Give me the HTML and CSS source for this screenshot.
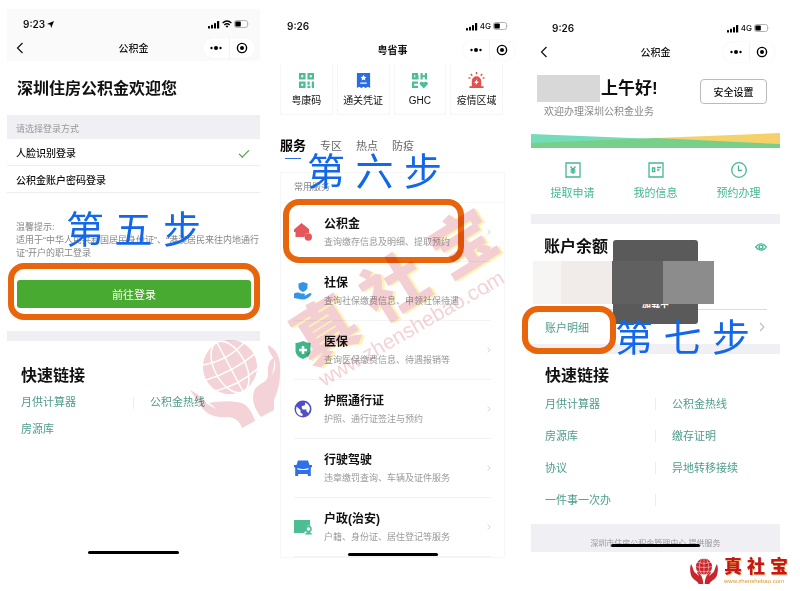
FILE: index.html
```
<!DOCTYPE html>
<html lang="zh-CN">
<head>
    <meta charset="utf-8">
    <title>深圳公积金查询步骤</title>
    <meta name="viewport" content="width=device-width, initial-scale=1">
    <link rel="stylesheet" href="styles.css">
</head>
<body>
    <!-- shared icons -->
    <svg class="defs" width="0" height="0">
        <symbol id="signal" viewBox="0 0 12 9">
            <rect x="0" y="6" width="2" height="2.5" rx=".6"/><rect x="3" y="4.7" width="2" height="3.8" rx=".6"/><rect x="6" y="3" width="2" height="5.5" rx=".6"/><rect x="9" y="1" width="2.2" height="7.5" rx=".6"/>
        </symbol>
        <symbol id="battery" viewBox="0 0 16 8">
            <rect x=".5" y=".5" width="13" height="7" rx="2" fill="none" stroke="#aaa" stroke-width=".9"/>
            <rect x="1.4" y="1.4" width="5.4" height="5.2" rx=".8"/><path d="M14.6 2.8q1.2 1.2 0 2.4z" fill="#aaa"/>
        </symbol>
        <symbol id="dots" viewBox="0 0 12 6">
            <circle cx="1.5" cy="3" r="1.2"/><circle cx="6" cy="3" r="2"/><circle cx="10.5" cy="3" r="1.2"/>
        </symbol>
        <symbol id="target" viewBox="0 0 12 12">
            <circle cx="6" cy="6" r="4.6" fill="none" stroke="#000" stroke-width="1.4"/><circle cx="6" cy="6" r="2"/>
        </symbol>
        <symbol id="back" viewBox="0 0 8 12">
            <path d="M6.5 1L1.5 6l5 5" fill="none" stroke="#111" stroke-width="1.2"/>
        </symbol>
        <symbol id="more" viewBox="0 0 6 10">
            <path d="M1 1l4 4-4 4" fill="none" stroke="currentColor" stroke-width="1.1"/>
        </symbol>
        <symbol id="globe" viewBox="0 0 60 60">
            <circle cx="30" cy="30" r="28" fill="currentColor"/>
            <g fill="none" stroke="#fff" stroke-width="1.6">
                <path d="M30 1v58M1 30q29 6 58 0M6 15q24 8 48 0M6 45q24 6 48 0"/>
                <ellipse cx="30" cy="30" rx="16" ry="29"/>
            </g>
        </symbol>
        <symbol id="hand" viewBox="0 0 42 66">
            <path d="M3 4c6 10 6 18 10 24l14 12c-1-6-8-10-5-12 10 5 17 16 18 36H26C22 54 8 52 3 38-1 24 0 12 3 4z" fill="currentColor"/>
        </symbol>
    </svg>

    <main class="phones">

        <!-- step 5: login -->
        <section class="phone login">
            <header class="head">
                <div class="status">
                    <span>9:23 <svg width="7" height="7" viewBox="0 0 8 8"><path d="M8 0L4.8 8 3.8 4.2 0 3.4z"/></svg></span>
                    <span class="signals">
                        <svg width="12" height="9"><use href="#signal"/></svg>
                        <svg width="10" height="8" viewBox="0 0 10 8"><path d="M.6 3q4.400-4 8.800 0M2.300 4.900q2.700-2.300 5.400 0" fill="none" stroke="#000" stroke-width="1.300"/><path d="M3.600 6.200q1.400-1.200 2.800 0L5 7.700z"/></svg>
                        <svg width="16" height="8"><use href="#battery"/></svg>
                    </span>
                </div>
                <nav class="nav">
                    <button class="back" aria-label="返回"><svg width="8" height="12"><use href="#back"/></svg></button>
                    <h1>公积金</h1>
                    <div class="capsule">
                        <button aria-label="更多"><svg width="12" height="6"><use href="#dots"/></svg></button>
                        <button aria-label="关闭"><svg width="12" height="12"><use href="#target"/></svg></button>
                    </div>
                </nav>
            </header>
            <h2 class="welcome">深圳住房公积金欢迎您</h2>
            <p class="choose">请选择登录方式</p>
            <label class="method">人脸识别登录<input type="radio" name="method" checked></label>
            <label class="method">公积金账户密码登录<input type="radio" name="method"></label>
            <div class="notice">
                <p>温馨提示:</p>
                <p>适用于“中华人民共和国居民身份证”、“港澳居民来往内地通行<br>证”开户的职工登录</p>
            </div>
            <div class="submit">
                <button>前往登录</button>
                <span class="ring"></span>
            </div>
            <div class="band"></div>
            <h2 class="quick">快速链接</h2>
            <div class="links">
                <a href="#">月供计算器</a><a href="#">公积金热线</a>
                <a href="#">房源库</a>
            </div>
            <div class="step">第 五 步</div>
            <div class="homebar"></div>
        </section>

        <!-- step 6: service list -->
        <section class="phone services">
            <header class="head">
                <div class="status">
                    <span>9:26</span>
                    <span class="signals">
                        <svg width="12" height="9"><use href="#signal"/></svg>
                        <small>4G</small>
                        <svg width="16" height="8"><use href="#battery"/></svg>
                    </span>
                </div>
                <nav class="nav">
                    <span></span>
                    <h1>粤省事</h1>
                    <div class="capsule">
                        <button aria-label="更多"><svg width="12" height="6"><use href="#dots"/></svg></button>
                        <button aria-label="关闭"><svg width="12" height="12"><use href="#target"/></svg></button>
                    </div>
                </nav>
            </header>
            <div class="cards">
                <a href="#">
                    <svg viewBox="0 0 18 18"><g fill="none" stroke="#4cbd96" stroke-width="2.400"><path d="M2.200 2.200h4.600v4.600H2.200zM11.200 2.200h4.600v4.600h-4.600zM2.200 11.200h4.600v4.600H2.200z"/><path d="M11.200 10v3.500M10 15.800h3M15.800 10v7"/></g></svg>
                    粤康码
                </a>
                <a href="#">
                    <svg viewBox="0 0 18 18"><path d="M2 1h14v16l-2.300-1.500L11.300 17 9 15.500 6.700 17l-2.400-1.500L2 17z" fill="#2b6be4"/><path d="M9 3l1 2 2.200.3-1.600 1.500.4 2.200-2-1-2 1 .4-2.200-1.600-1.500L8 5zM5.500 11h7v1.500h-7z" fill="#fff"/></svg>
                    通关凭证
                </a>
                <a href="#">
                    <svg viewBox="0 0 18 18"><path d="M7.500 2.200H2.200v4.600h4.600V4.500H4.500M11.200 1v7M15.800 1v7M11 4.500h5M7.500 11.200H2.200v4.600h5.300" fill="none" stroke="#4cbd96" stroke-width="2.300"/><path d="M13.500 17.500L9.300 13c-1-2 2-4 4.200-1.800C15.700 9 18.700 11 17.700 13z" fill="#4cbd96"/></svg>
                    GHC
                </a>
                <a href="#">
                    <svg viewBox="0 0 18 18"><path d="M4 15V9.500a5 5 0 0 1 10 0V15h2.500v2h-15v-2z" fill="#e2504f"/><path d="M9.800 7.500L6.500 11.700h2L8 14l3.500-4h-2z" fill="#fff"/><path d="M9 0v2.500M3 2l1.500 2M15 2l-1.500 2M.5 6l2 .8M17.500 6l-2 .8" stroke="#e2504f" stroke-width="1.500"/></svg>
                    疫情区域
                </a>
            </div>
            <div class="tabs">
                <button class="active">服务</button>
                <button>专区</button>
                <button>热点</button>
                <button>防疫</button>
            </div>
            <div class="list">
                <p class="caption">常用服务</p>
                <a class="item" href="#">
                    <svg class="icon" viewBox="0 0 18 18"><path d="M0 6.500L7.500 0 15 6v4a4.500 4.500 0 0 0-4.500 4H1.500V9H0z" fill="#e4575a"/><circle cx="14.300" cy="14" r="3.700" fill="#e4575a"/></svg>
                    <span><b>公积金</b><small>查询缴存信息及明细、提取预约</small></span>
                    <svg class="more" width="4" height="6"><use href="#more"/></svg>
                    <i class="ring"></i>
                </a>
                <a class="item" href="#">
                    <svg class="icon" viewBox="0 0 18 18"><path d="M9 0l4.500 1.500V5q0 3-4.500 5Q4.500 8 4.500 5V1.500z" fill="#3595e5"/><path d="M0 11.500q4-2 7 0h3q2 1 0 2H7h4l5-2.500q2 0 1.500 1.500Q13 18 8 17.500L0 16z" fill="#3595e5"/></svg>
                    <span><b>社保</b><small>查询社保缴费信息、申领社保待遇</small></span>
                    <svg class="more" width="4" height="6"><use href="#more"/></svg>
                </a>
                <a class="item" href="#">
                    <svg class="icon" viewBox="0 0 18 18"><path d="M9 0q4 2 7.500 2v8q0 5-7.500 8Q1.500 15 1.500 10V2Q5 2 9 0z" fill="#3fb688"/><path d="M9 5v8M5 9h8" stroke="#fff" stroke-width="2.500"/></svg>
                    <span><b>医保</b><small>查询医保缴费信息、待遇报销等</small></span>
                    <svg class="more" width="4" height="6"><use href="#more"/></svg>
                </a>
                <a class="item" href="#">
                    <svg class="icon" viewBox="0 0 18 18"><circle cx="9" cy="9" r="8.500" fill="#4f4ec4"/><path d="M2.500 6.500L6.500 10v2.500l2 1.500v2q-6-.5-6.500-6zM7.500 6.500L11 5V2.500q5 2 5 6.500l-1.500 4-2-1.500V9.500H8.500z" fill="#fff"/></svg>
                    <span><b>护照通行证</b><small>护照、通行证签注与预约</small></span>
                    <svg class="more" width="4" height="6"><use href="#more"/></svg>
                </a>
                <a class="item" href="#">
                    <svg class="icon" viewBox="0 0 18 18"><path d="M4 1.500h10l1.500 4.500H18v2l-1.200.5V17h-3v-2H4.200v2h-3V8.500L0 8V6h2.500z" fill="#2f6fe8"/><path d="M3.500 9q5.500 1.800 11 0v1.500q-5.500 1-11 0z" fill="#fff"/></svg>
                    <span><b>行驶驾驶</b><small>违章缴罚查询、车辆及证件服务</small></span>
                    <svg class="more" width="4" height="6"><use href="#more"/></svg>
                </a>
                <a class="item" href="#">
                    <svg class="icon" viewBox="0 0 18 18"><path d="M0 2h16v13H0z" fill="#4dbd94"/><path d="M10.500 17v-3l1.500-1V9q2-3 5 0v8z" fill="#fff"/><circle cx="14.500" cy="11" r="2.500" fill="none" stroke="#4dbd94" stroke-width="1.500"/><path d="M11 16.500q.5-2.500 3.500-2.500t3.500 2.500z" fill="#4dbd94"/></svg>
                    <span><b>户政(治安)</b><small>户籍、身份证、居住登记等服务</small></span>
                    <svg class="more" width="4" height="6"><use href="#more"/></svg>
                </a>
            </div>
            <div class="step">第 六 步</div>
            <div class="homebar"></div>
        </section>

        <!-- step 7: account -->
        <section class="phone account">
            <header class="head">
                <div class="status">
                    <span>9:26</span>
                    <span class="signals">
                        <svg width="12" height="9"><use href="#signal"/></svg>
                        <small>4G</small>
                        <svg width="16" height="8"><use href="#battery"/></svg>
                    </span>
                </div>
                <nav class="nav">
                    <button class="back" aria-label="返回"><svg width="8" height="12"><use href="#back"/></svg></button>
                    <h1>公积金</h1>
                    <div class="capsule">
                        <button aria-label="更多"><svg width="12" height="6"><use href="#dots"/></svg></button>
                        <button aria-label="关闭"><svg width="12" height="12"><use href="#target"/></svg></button>
                    </div>
                </nav>
            </header>
            <div class="greeting">
                <div>
                    <h2><span class="name"></span>上午好!</h2>
                    <p>欢迎办理深圳公积金业务</p>
                </div>
                <button>安全设置</button>
            </div>
            <svg class="ribbon" viewBox="0 0 249 15" preserveAspectRatio="none">
                <path d="M0 1l125 5v9H0z" fill="#74dcb9"/>
                <path d="M125 5L249 0v15H125z" fill="#f5d16c"/>
                <path d="M0 10l125-5 124 6v4H0z" fill="#77cf8a"/>
            </svg>
            <div class="actions">
                <a href="#">
                    <svg viewBox="0 0 16 16"><path d="M1 1h14v14H1z"/><path d="M5.500 4.500L8 7.500l2.500-3M8 7.500v4.500M5.500 8h5M5.500 10h5"/></svg>
                    提取申请
                </a>
                <a href="#">
                    <svg viewBox="0 0 16 16"><path d="M1 1h14v14H1z"/><path d="M4.500 6h2.200v3.500H4.500zM9 5.500h4M9 8h2.500"/></svg>
                    我的信息
                </a>
                <a href="#">
                    <svg viewBox="0 0 16 16"><circle cx="8" cy="8" r="7.300"/><path d="M7.500 3.500v5H11"/></svg>
                    预约办理
                </a>
            </div>
            <div class="band"></div>
            <div class="balance">
                <h2>账户余额</h2>
                <button aria-label="显示余额"><svg width="12" height="8" viewBox="0 0 12 8"><path d="M.7 4Q6-2.500 11.300 4 6 10.500.7 4z" fill="none" stroke="#45b793" stroke-width="1.200"/><circle cx="6" cy="4" r="1.900" fill="none" stroke="#45b793" stroke-width="1.400"/></svg></button>
                <div class="toast">加载中</div>
                <div class="mosaic"><i></i><i></i><i></i><i></i></div>
            </div>
            <a class="detail" href="#">
                账户明细
                <svg width="6" height="10"><use href="#more"/></svg>
                <i class="ring"></i>
            </a>
            <div class="band"></div>
            <h2 class="quick">快速链接</h2>
            <div class="links">
                <a href="#">月供计算器</a><a href="#">公积金热线</a>
                <a href="#">房源库</a><a href="#">缴存证明</a>
                <a href="#">协议</a><a href="#">异地转移接续</a>
                <a href="#">一件事一次办</a>
            </div>
            <p class="provider">深圳市住房公积金管理中心 提供服务</p>
            <div class="step">第 七 步</div>
            <div class="homebar"></div>
        </section>
    </main>

    <footer class="brand">
        <svg width="28" height="27" viewBox="0 0 84 81">
            <g color="#c8262c">
                <use href="#globe" x="16" y="0" width="52" height="52"/>
                <use href="#hand" x="0" y="14" width="42" height="66"/>
                <use href="#hand" transform="matrix(-1 0 0 1 84 0)" x="0" y="14" width="42" height="66"/>
            </g>
        </svg>
        <div>
            <strong>真 社 宝</strong>
            <a href="#">www.zhenshebao.com</a>
        </div>
    </footer>

    <svg class="watermark" width="340" height="250" viewBox="0 0 340 250" aria-hidden="true">
        <g color="#f3d3d7" fill="#f3d3d7">
            <use href="#globe" width="58" height="58" transform="translate(11 153) rotate(-28 29 29)"/>
            <path d="M0 205c8 4 12 7 17 14l9 5c-2-3-6-5-7-6 11-2 26-3 35 1 6 4 9 11 11 17l-13 7c-3-8-7-10-14-11-16 1-23-4-28-12z"/>
            <path d="M78 160c8 4 12 12 12 21 1 19-4 29-6 34v10l-13 7c-8-10-10-20-6-28 5-7 13-6 13-14-1-10 2-16 6-17 1 7-1 12-2 17 4-6 4-12 2-16-4-6-6-9-6-14z"/>
        </g>
        <g transform="translate(120 182) rotate(-32)">
            <text class="mark shade" x="2" y="2">真 社 宝</text>
            <text class="mark" x="0" y="0">真 社 宝</text>
        </g>
        <text class="site" transform="translate(134 202) rotate(-30)">www.zhenshebao.com</text>
    </svg>
</body>
</html>
```
FILE: styles.css
```
*{
    margin: 0;
    padding: 0;
    box-sizing: border-box;
}
body{
    position: relative;
    background: #fff;
    color: #111;
    font-family: "Liberation Sans", "Noto Sans CJK SC", sans-serif;
    font-size: 10px;
}
button{
    border: none;
    background: none;
    color: inherit;
    font: inherit;
    cursor: pointer;
}
a{
    color: inherit;
    text-decoration: none;
}
svg{
    display: block;
}
.defs{
    position: absolute;
}
.phones{
    display: grid;
    grid-template-columns: minmax(0, 253fr) minmax(0, 231fr) minmax(0, 249fr);
    gap: 20px;
    padding: 0 20px 0 7px;
}
.phone{
    position: relative;
}
.login{
    margin-top: 9px;
}
.services{
    margin: 11px 6px 0 0;
    padding-bottom: 4px;
}
.account{
    margin-top: 13px;
    align-self: start;
}

/* status bar and navigation */
.head{
    padding-top: 5px;
}
.login .head{
    background: #fafafa;
}
.status{
    display: flex;
    justify-content: space-between;
    align-items: center;
    height: 20px;
    padding: 0 10px 0 16px;
    font-family: Inter, sans-serif;
    font-weight: 600;
}
.status span{
    display: flex;
    align-items: center;
    gap: 2px;
}
.status small{
    font-size: 8px;
    font-weight: 500;
}
.services .status{
    padding: 0 0 0 7px;
    margin-right: -4px;
}
.account .status{
    padding-left: 21px;
}
.nav{
    display: grid;
    grid-template-columns: 1fr auto 1fr;
    align-items: center;
    height: 27px;
    margin-bottom: 1px;
}
.nav h1{
    font-size: 10px;
    font-weight: 500;
}
.services h1{
    font-weight: 700;
}
.back{
    justify-self: start;
    padding: 4px 9px;
}
.capsule{
    justify-self: end;
    display: flex;
    width: 52px;
    height: 20px;
    margin-right: 5px;
    border-radius: 10px;
    background: #fff;
    box-shadow: 0 0 2px #eee;
}
.capsule button{
    flex: 1;
    display: flex;
    align-items: center;
    justify-content: center;
}
.capsule button + button{
    border-left: 1px solid #f3f3f3;
}
.services .capsule{
    margin-right: -10px;
}

/* shared pieces */
.band{
    height: 10px;
    background: #efeff4;
}
.quick{
    padding: 23px 14px 1px;
    font-size: 16px;
    line-height: 24px;
    font-weight: 700;
}
.links{
    display: grid;
    grid-template-columns: 129fr 110fr;
    padding: 0 0 0 14px;
    color: #4e9c8d;
    font-size: 11px;
    line-height: 27px;
}
.links a:nth-child(odd){
    background: linear-gradient(#eee, #eee) no-repeat right 16px center / 1px 12px;
}
.ring{
    position: absolute;
    border: 6px solid #e8650c;
    border-radius: 16px;
    pointer-events: none;
}
.step{
    position: absolute;
    z-index: 3;
    color: #1268e8;
    font-size: 38px;
    line-height: 40px;
    white-space: nowrap;
}
.homebar{
    position: absolute;
    left: 32%;
    right: 32%;
    height: 3px;
    border-radius: 2px;
    background: #000;
}

/* login */
.welcome{
    padding: 14px 10px 13px;
    font-size: 16px;
    line-height: 26px;
    font-weight: 700;
}
.choose{
    padding: 4px 9px 0;
    background: #efeff4;
    color: #999;
    font-size: 9px;
    line-height: 20px;
}
.method{
    display: flex;
    justify-content: space-between;
    align-items: center;
    height: 27px;
    padding: 0 11px 0 9px;
    border-bottom: 1px solid #eee;
    font-weight: 500;
}
.method input{
    appearance: none;
    width: 10px;
    height: 5px;
}
.method input:checked{
    border-left: 1px solid #3c9f2c;
    border-bottom: 1px solid #3c9f2c;
    transform: rotate(-45deg);
}
.notice{
    padding: 28px 0 20px 9px;
    color: #888;
    font-size: 9px;
    line-height: 13px;
    white-space: nowrap;
}
.submit{
    position: relative;
    margin: 0 9px 23px 10px;
}
.submit button{
    width: 100%;
    height: 28px;
    border-radius: 3px;
    background: #48aa30;
    color: #fff;
    font-size: 11px;
}
.submit .ring{
    inset: -17px -9px -12px;
}
.login .links a:nth-child(3){
    background: none;
}
.login .step{
    left: 59px;
    top: 201px;
}
.login .homebar{
    bottom: 8px;
}

/* services */
.cards{
    display: grid;
    grid-template-columns: repeat(4, 1fr);
    gap: 4px;
    margin-right: 2px;
}
.cards a{
    display: flex;
    flex-direction: column;
    align-items: center;
    gap: 4px;
    height: 51px;
    padding-top: 8px;
    border: 1px solid #f6f6f6;
    border-top: none;
    line-height: 16px;
    white-space: nowrap;
}
.cards svg{
    width: 17px;
    height: 17px;
}
.tabs{
    display: flex;
    align-items: center;
    gap: 14px;
    height: 45px;
    margin-bottom: 12px;
    padding-top: 17px;
    color: #666;
    font-size: 11px;
    line-height: 26px;
}
.tabs .active{
    position: relative;
    color: #000;
    font-size: 13px;
    font-weight: 700;
}
.tabs .active::after{
    content: "";
    position: absolute;
    left: 5px;
    right: 5px;
    bottom: 0;
    height: 1px;
    background: #2b6be4;
}
.list{
    border: 1px solid #f6f6f6;
}
.caption{
    padding: 0 13px;
    border-bottom: 1px solid #f6f6f6;
    color: #888;
    font-size: 9px;
    line-height: 29px;
}
.item{
    position: relative;
    display: flex;
    align-items: center;
    gap: 12px;
    height: 59px;
    margin: 0 13px;
    border-bottom: 1px solid #f3f3f3;
    white-space: nowrap;
}
.item .icon{
    flex: none;
    width: 18px;
    height: 18px;
}
.item span{
    flex: 1;
    min-width: 0;
}
.item b{
    display: block;
    font-size: 12px;
    line-height: 20px;
}
.item small{
    display: block;
    color: #999;
    font-size: 9px;
    line-height: 16px;
}
.item .more{
    color: #bbb;
}
.item .ring{
    top: -4px;
    left: -11px;
    right: 27px;
    height: 64px;
}
.services .step{
    left: 27px;
    top: 141px;
}
.services .homebar{
    left: 30%;
    right: 30%;
    bottom: 6px;
}

/* account */
.greeting{
    display: flex;
    justify-content: space-between;
    align-items: flex-start;
    padding: 9px 13px 0 6px;
}
.greeting h2{
    display: flex;
    gap: 1px;
    font-size: 17px;
    line-height: 27px;
    font-weight: 700;
}
.greeting .name{
    width: 63px;
    height: 27px;
    background: #d8d8d8;
}
.greeting p{
    padding-left: 7px;
    color: #888;
    line-height: 20px;
}
.greeting button{
    width: 67px;
    height: 25px;
    margin-top: 4px;
    border: 1px solid #bbb;
    border-radius: 4px;
    font-weight: 500;
}
.ribbon{
    width: 100%;
    height: 15px;
    margin-top: 11px;
}
.actions{
    display: grid;
    grid-template-columns: repeat(3, 1fr);
    padding: 14px 0 11px;
    color: #45b793;
    font-size: 11px;
    line-height: 20px;
}
.actions a{
    display: flex;
    flex-direction: column;
    align-items: center;
    gap: 5px;
}
.actions svg{
    width: 16px;
    height: 16px;
    fill: none;
    stroke: #45b793;
    stroke-width: 1.3;
}
.balance{
    position: relative;
    display: flex;
    justify-content: space-between;
    align-items: flex-start;
    height: 86px;
    margin: 0 13px;
    padding-top: 11px;
    border-bottom: 1px solid #ddd;
}
.balance h2{
    font-size: 16px;
    line-height: 24px;
    font-weight: 700;
}
.balance button{
    padding-top: 8px;
}
.toast{
    position: absolute;
    z-index: 1;
    left: 69px;
    top: 16px;
    width: 85px;
    height: 84px;
    padding-top: 56px;
    border-radius: 3px;
    background: #5a5a5a;
    color: #fff;
    font-size: 9px;
    line-height: 16px;
    font-weight: 700;
    text-align: center;
}
.mosaic{
    position: absolute;
    z-index: 2;
    left: -11px;
    top: 37px;
    display: grid;
    grid-template-columns: 28px 51px 51px 51px;
    height: 43px;
}
.mosaic i:nth-child(1){ background: #f6f5f4; }
.mosaic i:nth-child(2){ background: #f1ebe9; }
.mosaic i:nth-child(3){ background: #606060; }
.mosaic i:nth-child(4){ background: #8c8c8c; }
.detail{
    position: relative;
    display: flex;
    justify-content: space-between;
    align-items: center;
    height: 34px;
    padding: 0 15px 0 14px;
    color: #4e9c8d;
    font-size: 11px;
}
.detail svg{
    color: #bbb;
}
.detail .ring{
    z-index: 2;
    left: -9px;
    top: -4px;
    width: 94px;
    height: 48px;
}
.account .quick{
    padding-top: 10px;
    padding-bottom: 0;
}
.account .links{
    padding-bottom: 8px;
    line-height: 32px;
    grid-template-columns: 127fr 108fr;
}
.account .provider{
    padding-top: 12px;
    background: #efeff4;
    color: #999;
    font-size: 8px;
    line-height: 16px;
    text-align: center;
}
.account .step{
    left: 84px;
    top: 305px;
}
.account .homebar{
    bottom: 5px;
}

/* logo */
.brand{
    display: flex;
    justify-content: flex-end;
    align-items: center;
    gap: 6px;
    margin-top: -5px;
    padding-right: 12px;
}
.brand strong{
    display: block;
    color: #c8161d;
    font-size: 18px;
    line-height: 20px;
    font-weight: 900;
    text-shadow: 1px 1px 0 #f7dc7a;
}
.brand a{
    display: block;
    color: #d9962e;
    font-size: 6px;
    line-height: 8px;
}
.watermark{
    position: absolute;
    left: 190px;
    top: 185px;
    mix-blend-mode: multiply;
    pointer-events: none;
}
.mark{
    fill: #f3cfd3;
    font-size: 64px;
    font-weight: 900;
}
.shade{
    fill: #fdf3b4;
}
.site{
    fill: #f3d3d7;
    font-size: 21px;
}
```
